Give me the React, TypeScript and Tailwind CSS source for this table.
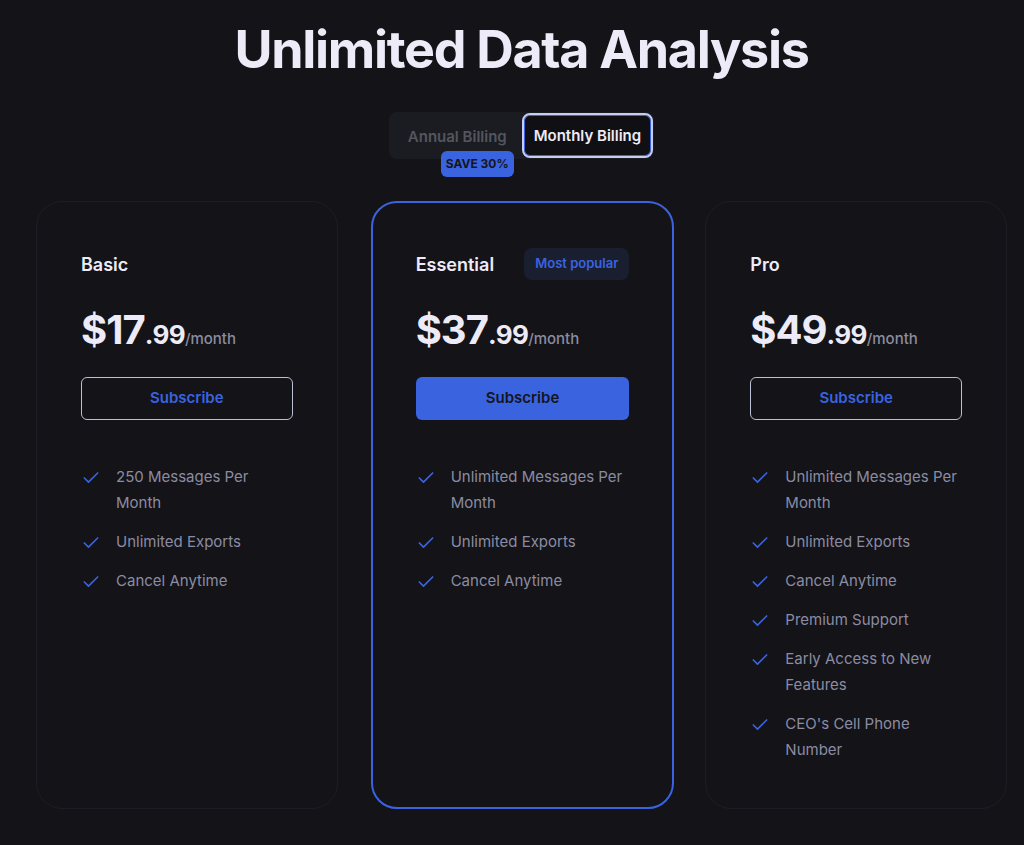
import { Check } from "lucide-react";

type Plan = {
  name: string;
  dollars: string;
  cents: string;
  features: string[];
  popular?: boolean;
};

const plans: Plan[] = [
  {
    name: "Basic",
    dollars: "$17",
    cents: ".99",
    features: ["250 Messages Per Month", "Unlimited Exports", "Cancel Anytime"],
  },
  {
    name: "Essential",
    dollars: "$37",
    cents: ".99",
    popular: true,
    features: ["Unlimited Messages Per Month", "Unlimited Exports", "Cancel Anytime"],
  },
  {
    name: "Pro",
    dollars: "$49",
    cents: ".99",
    features: [
      "Unlimited Messages Per Month",
      "Unlimited Exports",
      "Cancel Anytime",
      "Premium Support",
      "Early Access to New Features",
      "CEO's Cell Phone Number",
    ],
  },
];

const PlanCard = (props: Plan) => {
  return (
    <div
      className={
        props.popular
          ? "rounded-[26px] border-2 border-[#3a63e0] -mr-[2px] px-[43px] pt-[45px] pb-[44px]"
          : "rounded-[26px] border border-[#1d1d25] px-[44px] pt-[46px] pb-[45px]"
      }
    >
      <div className="flex items-center justify-between h-[32px]">
        <h3 className="text-[18px] font-semibold text-[#ecebf7]">{props.name}</h3>
        {props.popular && (
          <span className="rounded-lg bg-[#1a1f30] px-[11px] py-[6px] text-[13px] font-semibold text-[#3a63e0]">
            Most popular
          </span>
        )}
      </div>

      <div className="mt-[30px] flex items-baseline text-[#ecebf7]">
        <span className="text-[40px] font-bold tracking-tight leading-none">{props.dollars}</span>
        <span className="text-[26px] font-bold tracking-tight leading-none">{props.cents}</span>
        <span className="text-[15px] font-medium text-[#8b8ca0]">/month</span>
      </div>

      <button
        className={
          props.popular
            ? "mt-[26px] w-full h-[43px] rounded-md bg-[#3a63e0] text-[15px] font-semibold text-[#15161d]"
            : "mt-[26px] w-full h-[43px] rounded-md border border-[#b9bfd6] text-[15px] font-semibold text-[#3a63e0]"
        }
      >
        Subscribe
      </button>

      <ul className="mt-[44px] flex flex-col gap-[13px]">
        {props.features.map((f) => (
          <li key={f} className="flex items-start gap-[15px]">
            <Check className="mt-[4px] h-[20px] w-[20px] shrink-0 text-[#3a63e0]" strokeWidth={2} />
            <span className="text-[15px] leading-[26px] text-[#8b8ca3]">{f}</span>
          </li>
        ))}
      </ul>
    </div>
  );
};

export default function App() {
  return (
    <div
      className="min-h-[845px] bg-[#131318] flex flex-col items-center pl-[36px] pr-[17px]"
      style={{ fontFamily: "Inter, 'Noto Sans', sans-serif" }}
    >
      <h1 className="mt-[22px] text-[52px] font-bold tracking-tight text-[#ecebf7] leading-[56px]">
        Unlimited Data Analysis
      </h1>

      <div className="relative mt-[34px] flex items-center rounded-lg bg-[#1b1c22] p-[1px]">
        <button className="pl-[18px] pr-[15px] h-[45px] pt-[3px] text-[15px] font-semibold text-[#54555f]">
          Annual Billing
        </button>
        <button className="h-[45px] px-[10px] pt-[2px] rounded-lg border-2 border-[#c7cdf0] bg-[#101014] text-[15px] font-semibold text-[#ecebf7] shadow-[inset_0_0_0_1px_#3a63e0]">
          Monthly Billing
        </button>
        <span className="absolute left-[52px] top-[39px] rounded-md bg-[#3a63e0] px-[5px] py-[3px] text-[12px] font-bold leading-[20px] text-[#15161d]">
          SAVE 30%
        </span>
      </div>

      <div className="mt-[42px] grid w-full grid-cols-3 gap-[33px]">
        {plans.map((p) => (
          <PlanCard key={p.name} {...p} />
        ))}
      </div>
    </div>
  );
}
